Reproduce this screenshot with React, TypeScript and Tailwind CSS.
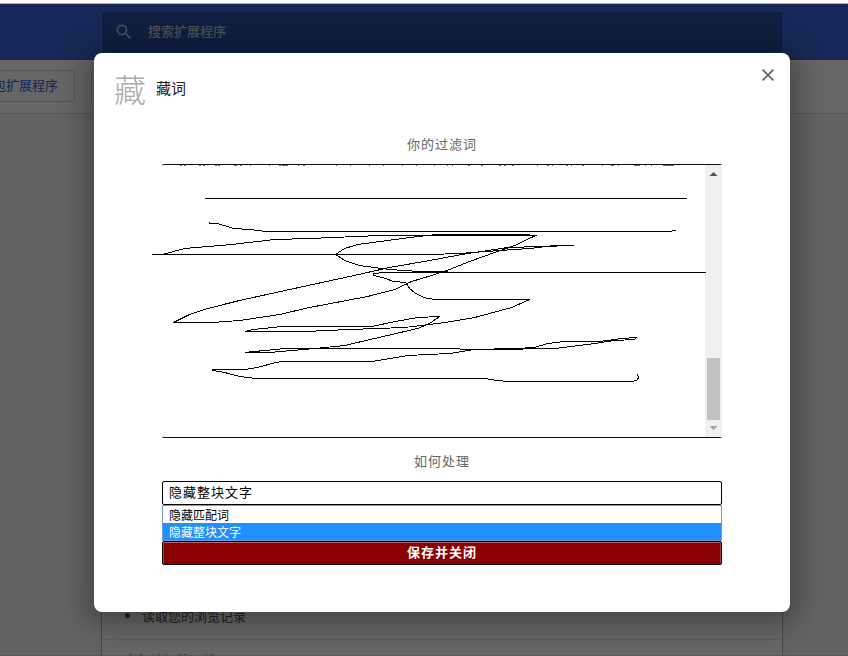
import React from 'react';

const strokes = [
  'M205 198H687',
  'M209 221L210 223L218 223L234 228L250 229L267 231H669L676 230',
  'M152 254H335H430L460 253L500 250L530 248L555 245H574',
  'M163 254L185 248L232 244L275 239L310 238L380 235H536',
  'M336 254L345 248L358 244L388 240L410 237L437 234H525L536 235L515 245L495 252L470 261L450 269L432 275L412 281L395 289L368 296L310 307L280 314L240 320L212 322H174L190 314L208 308L240 300L290 289L350 276L390 267L430 260L462 254L508 247L574 245',
  'M336 254L345 260L360 265L390 269L420 271L448 271',
  'M706 272H385L374 273V275L383 277L394 281L406 282L410 288L416 293L424 297L435 299H530L512 307L490 313L475 317L445 322L405 327L350 329L305 331H245L254 329L282 326H372L396 321L418 317L440 316L430 323L418 328L375 338L345 345L315 348L270 352H245L285 348H446L474 349H512L535 348H555L588 344L615 340L635 339L637 337L622 338L600 341H565L548 343L535 347L515 348L475 349L450 353L428 354L408 355L390 358L373 361H282L272 363L262 366L246 369L213 369V370L225 372L240 376L257 378H486L497 380L509 381H631L637 380L639 377L637 373',
];

// Tops of the glyphs in the list line scrolled under the upper border
const remnants = [
  [180, 2], [184, 2], [199, 2], [203, 2], [215, 2], [218, 2], [234, 3], [240, 2], [250, 1], [269, 1],
  [279, 2], [282, 6], [298, 1], [303, 2], [336, 1], [350, 1], [369, 1], [383, 1], [402, 1], [416, 1],
  [434, 1], [447, 1], [452, 1], [468, 2], [481, 2], [499, 2], [504, 2], [512, 2], [537, 1], [547, 2],
  [552, 1], [566, 2], [571, 1], [582, 2], [602, 1], [611, 3], [618, 1], [634, 6], [645, 1], [651, 1], [663, 11],
];

function Scribble() {
  return (
    <svg
      className="pointer-events-none absolute -left-2.5 top-0 h-[274px] w-[570px]"
      viewBox="152 164 570 274"
      fill="none"
      aria-hidden="true"
      shapeRendering="crispEdges"
    >
      {remnants.map(([x, w]) => (
        <rect key={x} x={x} y="165" width={w} height="1" fill="#666" />
      ))}
      <g transform="translate(-0.400 0.500)" stroke="#000" strokeWidth="1">
        {strokes.map((d) => (
          <path key={d} d={d} />
        ))}
      </g>
    </svg>
  );
}

function ExtensionsPage() {
  return (
    <div className="absolute inset-0 flex flex-col overflow-hidden bg-[#f6fbf8] text-[13px]" aria-hidden="true">
      <header className="h-[60px] shrink-0 bg-[#3767d6] pt-3 pr-[66px] pl-[102px]">
        <label className="flex h-10 items-center gap-3.5 rounded-xs bg-[#274e9f] px-3 text-[#bcc3d1]">
          <svg className="size-5 shrink-0" viewBox="0 0 24 24" fill="currentColor">
            <path d="M15.500 14h-.79l-.28-.27A6.470 6.470 0 0 0 16 9.500 6.500 6.500 0 1 0 9.500 16c1.610 0 3.090-.59 4.230-1.570l.27.28v.79l5 4.990L20.490 19l-4.990-5zm-6 0C7.010 14 5 11.990 5 9.500S7.010 5 9.500 5 14 7.010 14 9.500 11.990 14 9.500 14z" />
          </svg>
          <input
            className="min-w-0 flex-1 bg-transparent pb-0.5 font-medium placeholder:text-[#bcc3d1]"
            placeholder="搜索扩展程序"
            tabIndex={-1}
          />
        </label>
      </header>
      <div className="-ml-[37px] flex h-[54px] shrink-0 items-start gap-4 border-b border-[#dedede] bg-white pt-2.5">
        <button className="h-8 shrink-0 rounded border border-[#d2d4d8] px-4 pb-0.5 text-[#1a63d8]" tabIndex={-1}>打包扩展程序</button>
        <button aria-label="更新" className="h-8 w-16 shrink-0 rounded border border-[#d2d4d8]" tabIndex={-1} />
      </div>
      <main className="flex flex-1 flex-col pr-[65px] pl-[101px]">
        <section className="flex flex-1 flex-col justify-end border-x border-[#b0b0b0] bg-white text-[#4d4d4d]">
          <ul className="list-disc border-b border-[#ececec] pb-[13px] pl-10 leading-5">
            <li>读取您的浏览记录</li>
          </ul>
          <h3 className="h-4 shrink-0 pt-2.5 pl-[23px] leading-5 text-[#111]">有权访问的网站</h3>
        </section>
      </main>
    </div>
  );
}

export default function App() {
  return (
    <div className="relative flex min-h-screen flex-col font-['Noto_Sans_CJK_SC',sans-serif]">
      <ExtensionsPage />
      <div className="absolute inset-0 border-b border-[#5b5558] bg-black/60" />
      <div className="relative h-1 border-b border-[#aaa] bg-white" />
      <div className="relative pt-[49px] pr-[58px] pl-[94px]">
        <div
          role="dialog"
          aria-labelledby="dialog-title"
          className="rounded-lg bg-white pb-[47px] shadow-[0_4px_28px_8px_rgba(0,0,0,0.32)]"
        >
          <div className="flex h-[81px] items-start justify-between pr-3.5 pl-5">
            <div className="flex items-center gap-2.5 pt-[15px]">
              <span className="w-8 text-[32px] leading-10 font-light text-[#aaa]">藏</span>
              <h1 id="dialog-title" className="text-[15px] text-[#222]">藏词</h1>
            </div>
            <button aria-label="关闭" className="mt-3 flex h-5 w-4 items-center justify-center text-[#5f6368]">
              <svg className="size-3 shrink-0" viewBox="0 0 12 12" stroke="currentColor" strokeWidth="1.700">
                <path d="M.6.600l10.800 10.800M11.400.600L.6 11.400" />
              </svg>
            </button>
          </div>

          <div className="flex flex-col px-[68px] text-[13px] tracking-[1px]">
            <label htmlFor="words" className="h-[30px] text-center leading-5 text-[#666]">你的过滤词</label>
            <div className="relative flex h-[274px] rounded-xs border-y border-[#111]">
              <textarea id="words" className="min-w-0 flex-1 resize-none overflow-hidden outline-none" />
              <div className="flex w-[17px] flex-col items-center bg-[#f0f0f0]">
                <svg className="h-[17px] w-[17px] shrink-0" viewBox="0 0 17 17" fill="#505050">
                  <path d="M4.500 11h8L8.500 7z" />
                </svg>
                <div className="mt-auto h-[62px] w-[13px] bg-[#c1c1c1]" />
                <svg className="h-[17px] w-[17px] shrink-0" viewBox="0 0 17 17" fill="#a3a3a3">
                  <path d="M4.500 6h8L8.500 10z" />
                </svg>
              </div>
              <div className="pointer-events-none absolute inset-x-0 -top-px">
                <Scribble />
              </div>
            </div>

            <label htmlFor="mode" className="flex h-[43px] items-center justify-center pt-0.5 leading-5 text-[#666]">如何处理</label>
            <div className="relative pb-9">
              <select
                id="mode"
                defaultValue="block"
                className="block h-6 w-full appearance-none rounded-xs border border-black bg-white px-1.5 pb-0.5 leading-5 tracking-[1px] text-black outline-none"
              >
                <option value="word">隐藏匹配词</option>
                <option value="block">隐藏整块文字</option>
              </select>
              <ul
                role="listbox"
                className="absolute inset-x-0 top-6 border border-[#7b96d4] bg-white text-xs leading-[17px] tracking-normal text-black"
              >
                <li role="option" aria-selected="false" className="px-1.5">隐藏匹配词</li>
                <li role="option" aria-selected="true" className="bg-[#1e90ff] px-1.5 text-white">隐藏整块文字</li>
              </ul>
            </div>
            <button className="h-6 rounded-xs border border-black bg-[#8b0000] pb-0.5 font-bold tracking-[1px] text-white shadow-[inset_-1px_0_#a04040,inset_1px_0_#a04040,inset_0_1px_#b06a6a]">
              保存并关闭
            </button>
          </div>
        </div>
      </div>
    </div>
  );
}
